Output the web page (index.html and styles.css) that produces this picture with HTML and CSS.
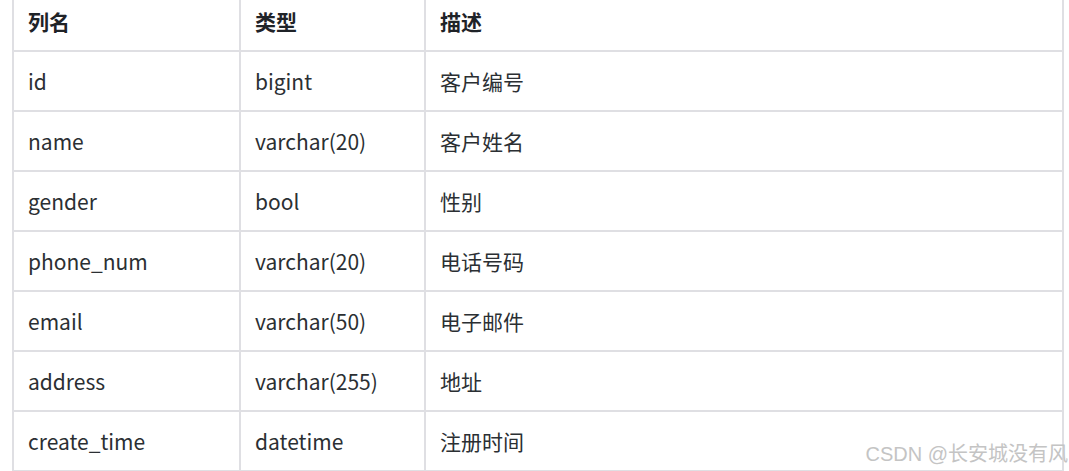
FILE: index.html
```html
<!DOCTYPE html>
<html lang="zh-CN">
<head>
<meta charset="utf-8">
<link rel="stylesheet" href="styles.css">
</head>
<body>
<div class="page">
  <table class="schema">
    <thead>
      <tr><th class="c1">列名</th><th class="c2">类型</th><th class="c3">描述</th></tr>
    </thead>
    <tbody>
      <tr><td>id</td><td>bigint</td><td>客户编号</td></tr>
      <tr><td>name</td><td>varchar(20)</td><td>客户姓名</td></tr>
      <tr><td>gender</td><td>bool</td><td>性别</td></tr>
      <tr><td>phone_num</td><td>varchar(20)</td><td>电话号码</td></tr>
      <tr><td>email</td><td>varchar(50)</td><td>电子邮件</td></tr>
      <tr><td>address</td><td>varchar(255)</td><td>地址</td></tr>
      <tr><td>create_time</td><td>datetime</td><td>注册时间</td></tr>
    </tbody>
  </table>
  <div class="watermark">CSDN @长安城没有风</div>
</div>
</body>
</html>
```

FILE: styles.css
```css
html, body {
  margin: 0;
  padding: 0;
  background: #ffffff;
  overflow: hidden;
}
.page {
  position: relative;
  width: 1069px;
  height: 471px;
  overflow: hidden;
  padding-left: 12px;
  box-sizing: border-box;
}
.schema {
  border-collapse: collapse;
  width: 1052px;
  margin-top: -10px;
  table-layout: fixed;
  font-family: "Noto Sans CJK SC", "Noto Sans", sans-serif;
  font-size: 21px;
  color: #24292f;
}
.schema th, .schema td {
  border: 2px solid #dfdfe3;
  height: 60px;
  padding: 0 0 0 14px;
  text-align: left;
  vertical-align: middle;
  box-sizing: border-box;
  line-height: 28px;
}
.schema th {
  font-weight: 700;
  color: #1f2328;
}
.schema td {
  font-weight: 400;
  color: #2b2f33;
}
.c1 { width: 227px; }
.c2 { width: 185px; }
.c3 { width: auto; }
.watermark {
  position: absolute;
  right: 1px;
  top: 442px;
  font-family: "Liberation Sans", "Noto Sans CJK SC", sans-serif;
  font-size: 20px;
  color: #c4c4c4;
  white-space: nowrap;
  line-height: 24px;
}
```
